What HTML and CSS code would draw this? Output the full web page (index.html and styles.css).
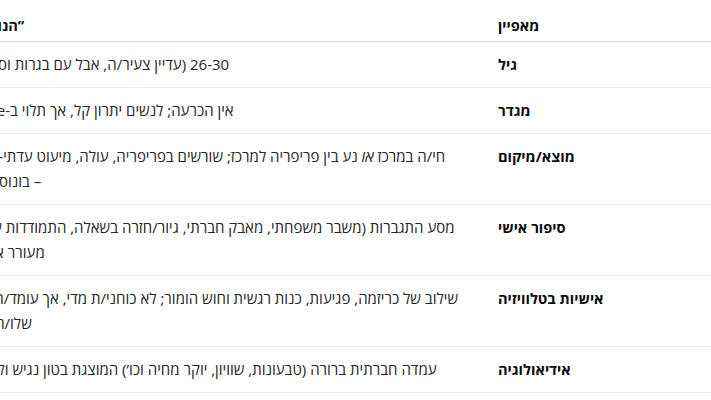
FILE: index.html
```html
<!DOCTYPE html>
<html lang="he" dir="rtl">
<head>
<meta charset="utf-8">
<title>טבלה</title>
<link rel="stylesheet" href="styles.css">
</head>
<body>
<div class="frame">
  <table class="feat">
    <colgroup><col class="col-key"><col class="col-val"></colgroup>
    <thead>
      <tr><th>מאפיין</th><th class="val">”הנוסחה” הזו</th></tr>
    </thead>
    <tbody>
      <tr><td class="key">גיל</td><td class="val">26-30 (עדיין צעיר/ה, אבל עם בגרות וסיפור חיים)</td></tr>
      <tr><td class="key">מגדר</td><td class="val">אין הכרעה; לנשים יתרון קל, אך תלוי ב-Narrative</td></tr>
      <tr><td class="key">מוצא/מיקום</td><td class="val">חי/ה במרכז <em>או</em> נע בין פריפריה למרכז; שורשים בפריפריה, עולה, מיעוט עדתי-תרבותי או <span class="nobr">– בונוס</span> משמעותי</td></tr>
      <tr><td class="key">סיפור אישי</td><td class="val">מסע התגברות (משבר משפחתי, מאבק חברתי, גיור/חזרה בשאלה, התמודדות עם מחלה) מעורר אהדה רבה</td></tr>
      <tr><td class="key">אישיות בטלוויזיה</td><td class="val">שילוב של כריזמה, פגיעות, כנות רגשית וחוש הומור; לא כוחני/ת מדי, אך עומד/ת היטב על שלו/ה בנחישות</td></tr>
      <tr><td class="key">אידיאולוגיה</td><td class="val">עמדה חברתית ברורה (טבעונות, שוויון, יוקר מחיה וכו’) המוצגת בטון נגיש ולא מתנשא</td></tr>
    </tbody>
  </table>
</div>
</body>
</html>
```
FILE: styles.css
```css
html, body {
  margin: 0;
  padding: 0;
  background: #ffffff;
}

body {
  font-family: "Open Sans", "Noto Sans", "DejaVu Sans", sans-serif;
  color: #1a1a1a;
}

.frame {
  width: 711px;
  height: 400px;
  overflow: hidden;
  direction: rtl;
  padding-top: 10px;
  box-sizing: border-box;
}

.feat {
  width: 779px;
  table-layout: fixed;
  border-collapse: collapse;
  line-height: 25px;
}

.col-key { width: 221px; }
.col-val { width: 558px; }

.feat th,
.feat td {
  text-align: left;
  vertical-align: top;
  padding: 10px 8px;
}

.feat .val {
  padding-right: 12px;
}

.nobr {
  white-space: nowrap;
}

.feat th {
  padding-top: 3px;
  padding-bottom: 3px;
  font-size: 14.6px;
  font-weight: 700;
  color: #0d0d0d;
  border-bottom: 1px solid #d9d9d9;
}

.feat td {
  font-size: 15px;
  color: #262626;
  border-bottom: 1px solid #ececec;
}

.feat td.key {
  font-size: 14.6px;
  font-weight: 700;
  color: #0d0d0d;
}
```
